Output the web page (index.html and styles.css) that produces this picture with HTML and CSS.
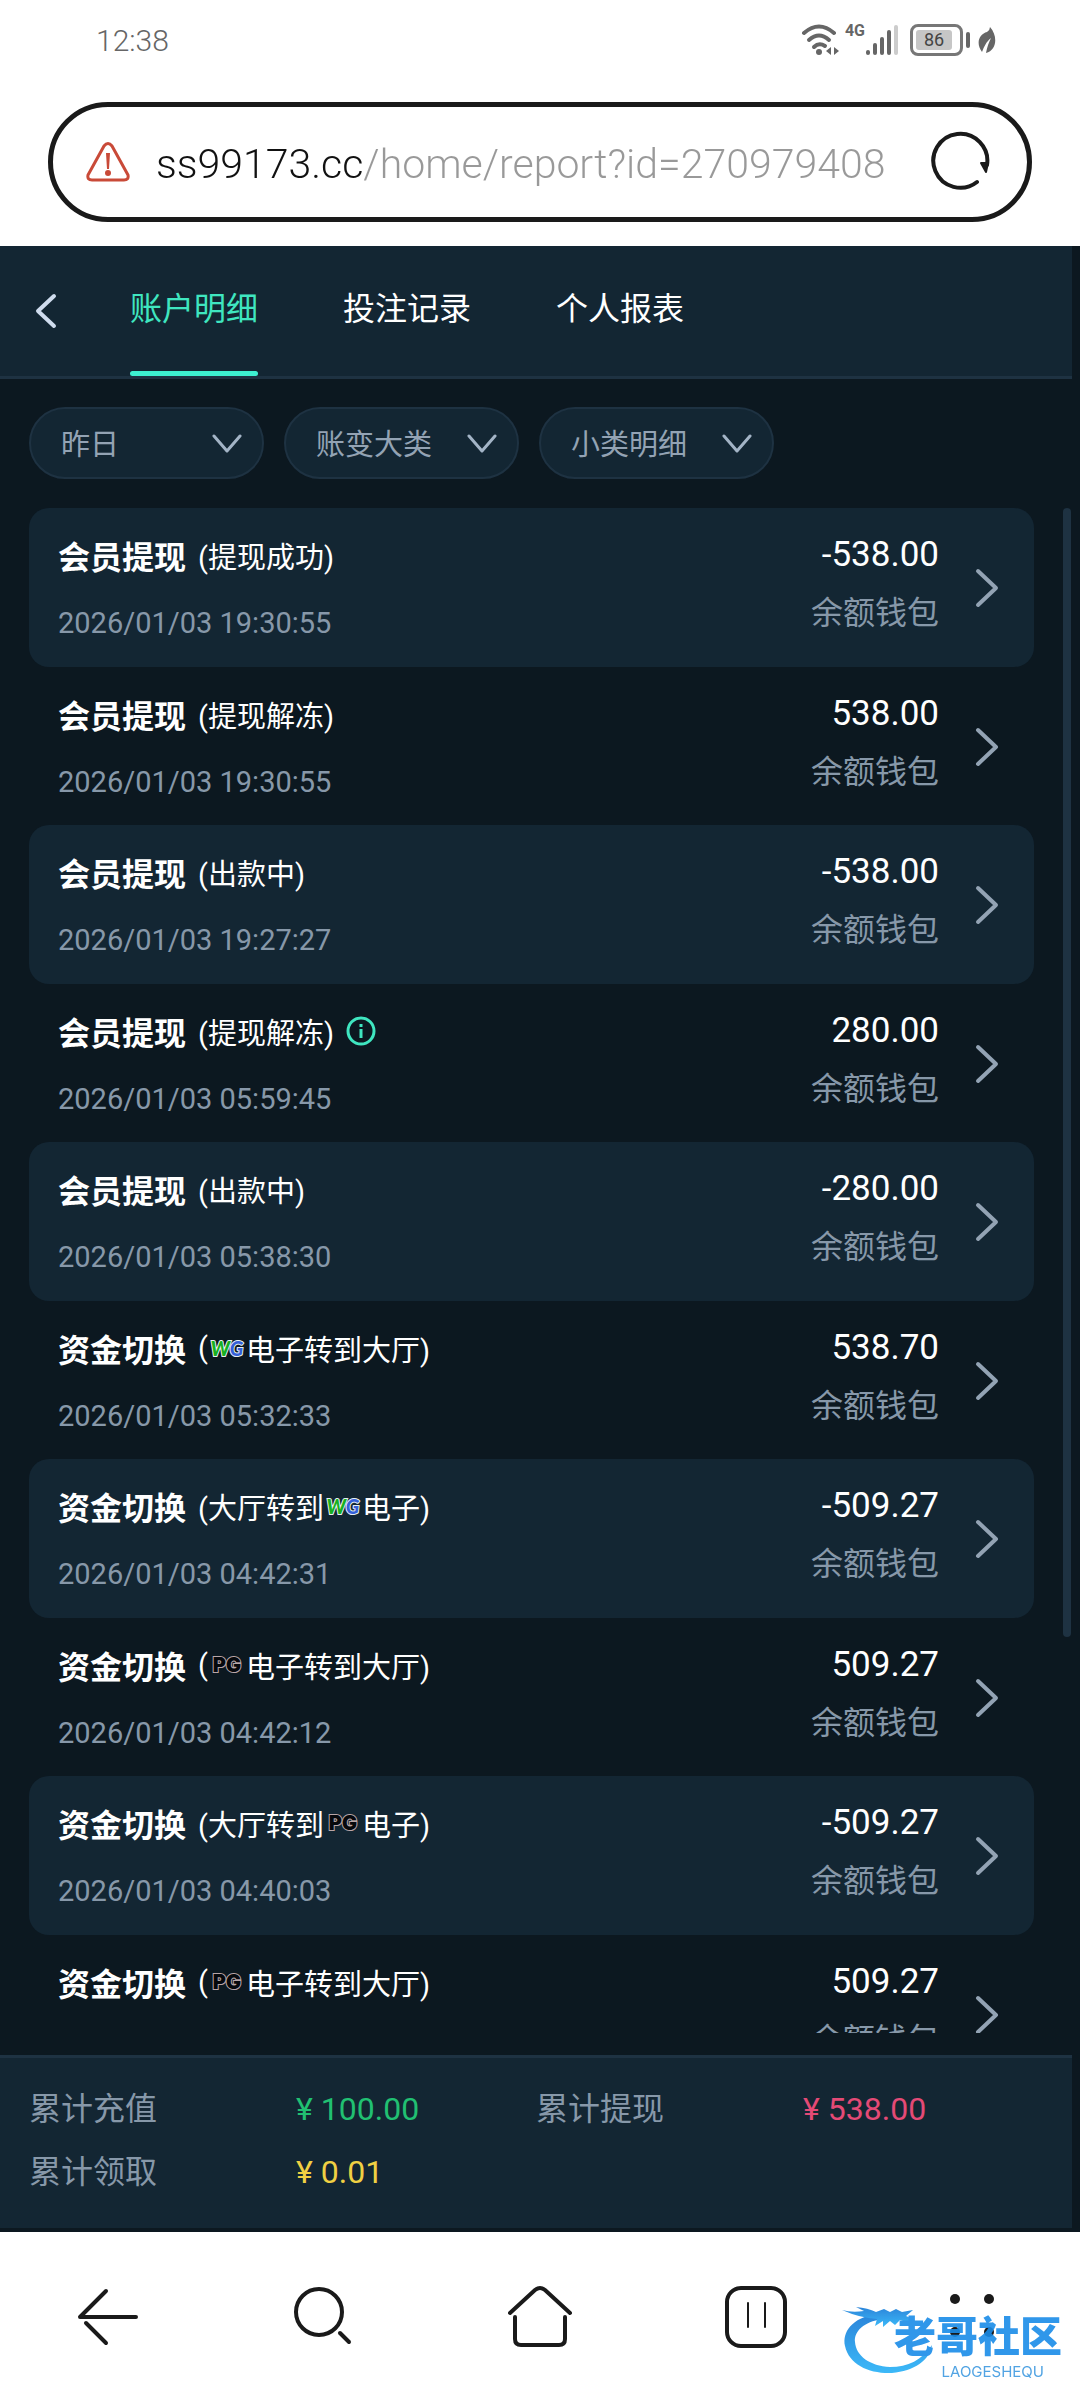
FILE: index.html
```html
<!DOCTYPE html>
<html lang="zh-CN">
<head>
<meta charset="UTF-8">
<meta name="viewport" content="width=device-width, initial-scale=1.0">
<title>账户明细</title>
<link rel="stylesheet" href="styles.css">
</head>
<body>
<svg class="symbols" aria-hidden="true">
    <symbol id="arrow" viewBox="0 0 24 40">
        <path d="M3 3 L21 20 L3 37" fill="none" stroke="currentColor" stroke-width="4" stroke-linecap="round" stroke-linejoin="round"/>
    </symbol>
    <symbol id="down" viewBox="0 0 30 20">
        <path d="M2 2 L15 17 L28 2" fill="none" stroke="currentColor" stroke-width="3" stroke-linecap="round" stroke-linejoin="round"/>
    </symbol>
</svg>

<div class="status-bar">
    <span class="time">12:38</span>
    <div class="status-icons">
        <svg width="40" height="34" viewBox="0 0 40 34">
            <g fill="none" stroke="#666" stroke-width="4" stroke-linecap="round">
                <path d="M3 10 Q18 -3 33 10"/>
                <path d="M8 17 Q18 8 28 17"/>
                <path d="M13 24 Q18 19 24 23"/>
            </g>
            <circle cx="18" cy="29" r="3" fill="#666"/>
            <path d="M30 24 V32 L25 28 Z M33 24 V32 L38 28 Z" fill="#666"/>
        </svg>
        <span class="network">4G</span>
        <svg width="32" height="34" viewBox="0 0 32 34">
            <g stroke="#666" stroke-width="4" stroke-linecap="round">
                <path d="M2 29 V30"/>
                <path d="M9 22 V30"/>
                <path d="M16 16 V30"/>
                <path d="M23 9 V30"/>
            </g>
            <path d="M30 4 V30" stroke="#ccc" stroke-width="4" stroke-linecap="round"/>
        </svg>
        <span class="battery"><span class="level">86</span></span>
        <span class="battery-cap"></span>
        <svg width="18" height="28" viewBox="0 0 18 28">
            <path d="M12 1 C20 10 19 24 8 27 C9 21 11 16 13 12 C8 16 6 21 4 26 C-3 16 2 8 9 6 Q12 4 12 1 Z" fill="#666"/>
        </svg>
    </div>
</div>

<form class="address-bar">
    <svg width="44" height="40" viewBox="0 0 44 40">
        <path d="M18 4 Q22 -1 26 4 L42 33 Q43 38 38 38 H6 Q1 38 2 33 Z" fill="none" stroke="#c94a38" stroke-width="3" stroke-linejoin="round"/>
        <path d="M20 11 H24 L23 27 H21 Z" fill="#c94a38"/>
        <circle cx="22" cy="31" r="3" fill="#c94a38"/>
    </svg>
    <input class="url" type="text" aria-label="网址" value="ss99173.cc/home/report?id=270979408">
    <button class="reload" type="button" aria-label="刷新">
        <svg width="60" height="62" viewBox="0 0 60 62">
            <path d="M47 51 A27 27 0 1 1 57 34" fill="none" stroke="#1a1a1a" stroke-width="4" stroke-linecap="round"/>
            <path d="M51 32 H58 L56 41 Z" fill="#1a1a1a" stroke="#1a1a1a" stroke-width="2" stroke-linejoin="round"/>
        </svg>
    </button>
</form>

<main class="app">
    <header class="top">
        <button class="back" aria-label="返回">
            <svg width="22" height="36" viewBox="0 0 22 36">
                <path d="M19 3 L3 18 L19 33" fill="none" stroke="#cfdcee" stroke-width="4" stroke-linecap="round" stroke-linejoin="round"/>
            </svg>
        </button>
        <nav class="tabs">
            <a class="tab active" href="#">账户明细</a>
            <a class="tab" href="#">投注记录</a>
            <a class="tab" href="#">个人报表</a>
        </nav>
    </header>

    <div class="filters">
        <div class="filter">
            <select aria-label="日期"><option>昨日</option></select>
            <svg class="down"><use href="#down"/></svg>
        </div>
        <div class="filter">
            <select aria-label="账变大类"><option>账变大类</option></select>
            <svg class="down"><use href="#down"/></svg>
        </div>
        <div class="filter">
            <select aria-label="小类明细"><option>小类明细</option></select>
            <svg class="down"><use href="#down"/></svg>
        </div>
    </div>

    <section class="list">
        <ul class="records">
            <li class="record">
                <div class="info">
                    <div class="title"><b>会员提现</b><span class="sub">(提现成功)</span></div>
                    <div class="date">2026/01/03 19:30:55</div>
                </div>
                <div class="money"><div class="amount">-538.00</div><div class="wallet">余额钱包</div></div>
                <svg class="arrow"><use href="#arrow"/></svg>
            </li>
            <li class="record">
                <div class="info">
                    <div class="title"><b>会员提现</b><span class="sub">(提现解冻)</span></div>
                    <div class="date">2026/01/03 19:30:55</div>
                </div>
                <div class="money"><div class="amount">538.00</div><div class="wallet">余额钱包</div></div>
                <svg class="arrow"><use href="#arrow"/></svg>
            </li>
            <li class="record">
                <div class="info">
                    <div class="title"><b>会员提现</b><span class="sub">(出款中)</span></div>
                    <div class="date">2026/01/03 19:27:27</div>
                </div>
                <div class="money"><div class="amount">-538.00</div><div class="wallet">余额钱包</div></div>
                <svg class="arrow"><use href="#arrow"/></svg>
            </li>
            <li class="record">
                <div class="info">
                    <div class="title"><b>会员提现</b><span class="sub">(提现解冻)</span>
                        <button class="tip" aria-label="说明">
                            <svg width="30" height="30" viewBox="0 0 30 30" fill="none" stroke="#3fe6c0" stroke-width="3">
                                <circle cx="15" cy="15" r="13"/>
                                <path d="M15 13 V22 M15 8 V11"/>
                            </svg>
                        </button>
                    </div>
                    <div class="date">2026/01/03 05:59:45</div>
                </div>
                <div class="money"><div class="amount">280.00</div><div class="wallet">余额钱包</div></div>
                <svg class="arrow"><use href="#arrow"/></svg>
            </li>
            <li class="record">
                <div class="info">
                    <div class="title"><b>会员提现</b><span class="sub">(出款中)</span></div>
                    <div class="date">2026/01/03 05:38:30</div>
                </div>
                <div class="money"><div class="amount">-280.00</div><div class="wallet">余额钱包</div></div>
                <svg class="arrow"><use href="#arrow"/></svg>
            </li>
            <li class="record">
                <div class="info">
                    <div class="title"><b>资金切换</b><span class="sub">(<span class="brand wg">W<i>G</i></span>电子转到大厅)</span></div>
                    <div class="date">2026/01/03 05:32:33</div>
                </div>
                <div class="money"><div class="amount">538.70</div><div class="wallet">余额钱包</div></div>
                <svg class="arrow"><use href="#arrow"/></svg>
            </li>
            <li class="record">
                <div class="info">
                    <div class="title"><b>资金切换</b><span class="sub">(大厅转到<span class="brand wg">W<i>G</i></span>电子)</span></div>
                    <div class="date">2026/01/03 04:42:31</div>
                </div>
                <div class="money"><div class="amount">-509.27</div><div class="wallet">余额钱包</div></div>
                <svg class="arrow"><use href="#arrow"/></svg>
            </li>
            <li class="record">
                <div class="info">
                    <div class="title"><b>资金切换</b><span class="sub">(<span class="brand pg">PG</span>电子转到大厅)</span></div>
                    <div class="date">2026/01/03 04:42:12</div>
                </div>
                <div class="money"><div class="amount">509.27</div><div class="wallet">余额钱包</div></div>
                <svg class="arrow"><use href="#arrow"/></svg>
            </li>
            <li class="record">
                <div class="info">
                    <div class="title"><b>资金切换</b><span class="sub">(大厅转到<span class="brand pg">PG</span>电子)</span></div>
                    <div class="date">2026/01/03 04:40:03</div>
                </div>
                <div class="money"><div class="amount">-509.27</div><div class="wallet">余额钱包</div></div>
                <svg class="arrow"><use href="#arrow"/></svg>
            </li>
            <li class="record">
                <div class="info">
                    <div class="title"><b>资金切换</b><span class="sub">(<span class="brand pg">PG</span>电子转到大厅)</span></div>
                </div>
                <div class="money"><div class="amount">509.27</div><div class="wallet">余额钱包</div></div>
                <svg class="arrow"><use href="#arrow"/></svg>
            </li>
        </ul>
        <div class="scrollbar"></div>
    </section>

    <dl class="totals">
        <div class="total"><dt>累计充值</dt><dd class="green">¥ 100.00</dd></div>
        <div class="total"><dt>累计提现</dt><dd class="pink">¥ 538.00</dd></div>
        <div class="total"><dt>累计领取</dt><dd class="yellow">¥ 0.01</dd></div>
    </dl>
</main>

<nav class="browser-nav">
    <button aria-label="后退">
        <svg viewBox="0 0 64 64"><path d="M60 33 H4 L30 7 M10 39 L30 59"/></svg>
    </button>
    <button aria-label="搜索">
        <svg viewBox="0 0 64 64"><circle cx="27" cy="28" r="23"/><path d="M48 49 L57 58"/></svg>
    </button>
    <button aria-label="主页">
        <svg viewBox="0 0 64 64"><path d="M2 29 L27 6 Q32 2 37 6 L62 29 M7 33 V55 Q7 61 13 61 H51 Q57 61 57 55 V33"/></svg>
    </button>
    <button aria-label="标签页">
        <svg viewBox="0 0 64 64"><rect x="3" y="4" width="58" height="58" rx="14"/><path class="thin" d="M24 19 V43 M41 19 V43"/></svg>
    </button>
    <button aria-label="菜单">
        <svg viewBox="0 0 64 64"><g class="dots"><circle cx="15" cy="15" r="5"/><circle cx="49" cy="15" r="5"/><circle cx="15" cy="48" r="5"/><circle cx="49" cy="48" r="5"/></g></svg>
    </button>
    <div class="community">
        <svg class="dragon" width="96" height="76" viewBox="0 0 96 76">
            <defs>
                <linearGradient id="sea" x1="0" y1="0" x2="0" y2="1">
                    <stop offset="0" stop-color="#1578d6"/>
                    <stop offset="1" stop-color="#27b2f8"/>
                </linearGradient>
            </defs>
            <path fill="url(#sea)" d="M36 14 C12 18 2 32 5 46 C9 65 30 74 52 73 C74 71 90 60 92 45 C82 60 68 67 50 67 C30 66 16 56 15 42 C14 31 24 22 42 19 Z"/>
            <path fill="url(#sea)" d="M2 10 Q12 13 24 11 L16 7 Q28 8 36 12 L44 9 L50 12 L56 9 L62 12 L73 10 L66 16 L73 19 L69 23 L60 20 L55 25 L50 21 L43 27 L43 21 L35 26 L37 19 Q20 18 2 10 Z"/>
        </svg>
        <div class="community-name">老哥社区</div>
        <div class="community-latin">LAOGESHEQU</div>
    </div>
</nav>
</body>
</html>
```
FILE: styles.css
```css
* {
    box-sizing: border-box;
}

body {
    margin: 0;
    height: 100vh;
    display: flex;
    flex-direction: column;
    background-color: #fff;
    font-family: Roboto, "Noto Sans CJK SC", sans-serif;
    color: #fff;
}

button {
    padding: 0;
    border: none;
    background: none;
    cursor: pointer;
}

svg {
    display: block;
    flex: none;
}

.symbols {
    position: absolute;
    width: 0;
    height: 0;
}

/* phone status bar */
.status-bar {
    display: flex;
    justify-content: space-between;
    align-items: center;
    height: 80px;
    padding: 0 84px 0 96px;
    color: #666;
}

.time {
    font-size: 30px;
    font-weight: 300;
}

.status-icons {
    display: flex;
    align-items: center;
}

.network {
    align-self: flex-start;
    margin: 0 1px 0 4px;
    font-size: 16px;
    line-height: 16px;
    font-weight: bold;
}

.battery {
    margin-left: 12px;
    padding: 3px 8px 3px 3px;
    border: 3px solid #777;
    border-radius: 8px;
}

.level {
    display: block;
    width: 36px;
    border-radius: 3px;
    background-color: #c6c6c6;
    color: #444;
    font-size: 18px;
    line-height: 20px;
    text-align: center;
}

.battery-cap {
    width: 4px;
    height: 16px;
    margin: 0 8px 0 3px;
    border-radius: 2px;
    background-color: #666;
}

/* address bar */
.address-bar {
    display: flex;
    align-items: center;
    height: 120px;
    margin: 22px 48px 24px;
    padding: 0 37px 0 33px;
    border: 5px solid #1a1a1a;
    border-radius: 60px;
}

.url {
    flex: 1;
    min-width: 0;
    margin: 4px 18px 0 26px;
    padding: 0;
    border: none;
    outline: none;
    font-family: Roboto, sans-serif;
    font-size: 41px;
    font-weight: 300;
    line-height: 60px;
    background: linear-gradient(to right, #111 207px, #999 207px);
    background-clip: text;
    -webkit-background-clip: text;
    color: transparent;
}

/* page */
.app {
    flex: 1;
    min-height: 0;
    display: flex;
    flex-direction: column;
    padding-bottom: 4px;
    background-color: #0c1820;
}

.top {
    display: flex;
    align-items: center;
    height: 133px;
    margin-right: 8px;
    padding-left: 35px;
    background-color: #132633;
    border-bottom: 3px solid #1e3242;
}

.tabs {
    display: flex;
    align-self: stretch;
    gap: 85px;
    margin-left: 73px;
}

.tab {
    font-size: 32px;
    line-height: 127px;
    color: #fff;
    text-decoration: none;
}

.tab.active {
    position: relative;
    color: #3fe6c0;
}

.tab.active::after {
    content: "";
    position: absolute;
    left: 0;
    right: 0;
    bottom: 0;
    height: 5px;
    border-radius: 3px;
    background-color: #3df0d0;
}

.filters {
    display: flex;
    gap: 20px;
    padding: 28px 29px 29px;
}

.filter {
    position: relative;
    width: 235px;
}

.filter select {
    width: 100%;
    height: 72px;
    padding: 3px 30px 0;
    appearance: none;
    border: 2px solid #1e3242;
    border-radius: 36px;
    background-color: #132633;
    color: #93a3b4;
    font-family: inherit;
    font-size: 29px;
}

.down {
    position: absolute;
    right: 22px;
    top: 27px;
    width: 30px;
    height: 20px;
    color: #a3b4c6;
    pointer-events: none;
}

.list {
    flex: 1;
    min-height: 0;
    display: flex;
    gap: 29px;
    margin-bottom: 22px;
    padding: 0 9px 0 29px;
    overflow: hidden;
}

.records {
    flex: 1;
    margin: 0;
    padding: 0;
    list-style: none;
}

.record {
    display: flex;
    height: 158px;
    padding: 23px 35px 0 29px;
    border-radius: 20px;
}

.record:nth-child(odd) {
    height: 159px;
    background-color: #132633;
}

.info {
    flex: 1;
}

.title {
    display: flex;
    align-items: center;
    gap: 12px;
    height: 48px;
    font-size: 32px;
}

.sub {
    display: flex;
    align-items: center;
    font-size: 29px;
}

/* provider marks inside the transfer text */
.brand {
    width: 38px;
    font-size: 20px;
    line-height: 22px;
    font-weight: 900;
    text-align: center;
    white-space: nowrap;
    paint-order: stroke;
}

.wg {
    font-family: Lato, sans-serif;
    font-style: italic;
    color: #17b020;
    -webkit-text-stroke: 2px #e8f0f4;
}

.wg i {
    color: #3560d8;
}

.pg {
    font-family: Inter, sans-serif;
    color: #06080c;
    -webkit-text-stroke: 2px #b9a6a8;
}

.date {
    margin-top: 26px;
    font-size: 29px;
    line-height: 36px;
    color: #8798a9;
}

.money {
    text-align: right;
}

.amount {
    font-size: 35px;
    line-height: 48px;
}

.wallet {
    margin-top: 13px;
    font-size: 32px;
    line-height: 42px;
    color: #8798a9;
}

.arrow {
    width: 24px;
    height: 40px;
    margin: 37px 0 0 36px;
    color: #93a3b4;
}

.scrollbar {
    width: 8px;
    height: 74%;
    border-radius: 4px;
    background-color: #1e3242;
}

.totals {
    display: grid;
    grid-template-columns: 1fr 1fr;
    margin: 0 8px 0 0;
    padding: 20px 29px 24px;
    border-top: 3px solid #1e3242;
    background-color: #132633;
    font-size: 32px;
    line-height: 63px;
}

.total {
    display: flex;
}

.total dt {
    width: 267px;
    color: #8798a9;
}

.total dd {
    margin: 0;
}

.green {
    color: #21c072;
}

.pink {
    color: #e44a76;
}

.yellow {
    color: #f0d043;
}

/* browser toolbar */
.browser-nav {
    position: relative;
    display: flex;
    height: 168px;
}

.browser-nav button {
    flex: 1;
    display: flex;
    justify-content: center;
    align-items: center;
}

.browser-nav button svg {
    width: 64px;
    height: 64px;
    fill: none;
    stroke: #1a1a1a;
    stroke-width: 4;
    stroke-linecap: round;
    stroke-linejoin: round;
}

.browser-nav .thin {
    stroke-width: 2;
}

.browser-nav .dots {
    fill: #1a1a1a;
    stroke: none;
}

.community {
    position: absolute;
    right: 16px;
    bottom: 24px;
    width: 224px;
    height: 76px;
    opacity: 0.9;
    pointer-events: none;
}

.dragon {
    position: absolute;
    left: 0;
    top: 0;
}

.community-name {
    position: absolute;
    right: 2px;
    top: 18px;
    font-size: 42px;
    line-height: 40px;
    font-weight: 900;
    color: #1a8ce8;
}

.community-latin {
    position: absolute;
    right: 20px;
    bottom: -4px;
    font-family: Inter, sans-serif;
    font-size: 15px;
    line-height: 16px;
    color: #3f9ae0;
}
```
